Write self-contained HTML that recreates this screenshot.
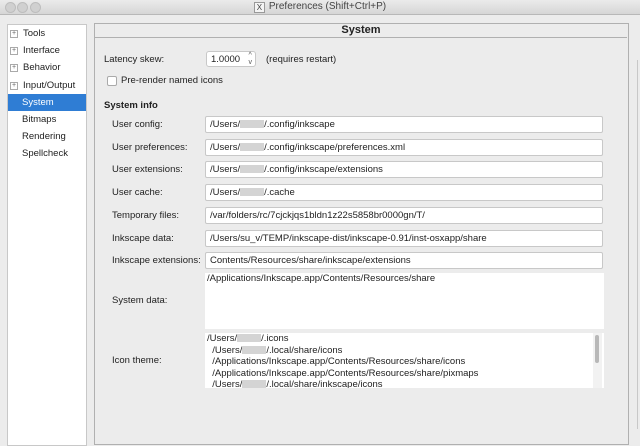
<!DOCTYPE html>
<html><head><style>
body{margin:0;width:640px;height:429px;overflow:hidden;background:#ececec;font-family:"Liberation Sans","DejaVu Sans",sans-serif;font-size:9.5px;color:#222;position:relative}
.a{position:absolute}
.title{left:0;top:0;width:640px;height:14px;background:linear-gradient(#ebebeb,#d6d6d6);border-bottom:1px solid #b8b8b8;text-align:center;font-size:10px;line-height:14px;color:#444}
.title .x{display:inline-block;width:9px;height:9px;border:1px solid #999;font-size:8px;line-height:9px;text-align:center;background:#f4f4f4;margin-right:4px;vertical-align:-1px}
.dot{width:9px;height:9px;border-radius:50%;background:#d0d0d0;border:1px solid #bdbdbd;top:2px}
.side{left:7px;top:24px;width:78px;height:420px;background:#fff;border:1px solid #c8c8c8}
.side div{height:17.2px;line-height:17px;padding-left:14px}
.pl{display:inline-block;width:6px;height:6px;border:1px solid #aaa;font-size:7px;line-height:6px;text-align:center;margin-left:-12px;margin-right:5px;color:#666;vertical-align:1px}
.sel{background:#2f7dd4;color:#fff}
.panel{left:94px;top:23px;width:533px;height:420px;border:1px solid #b0b0b0}
.hdr{left:95px;top:24px;width:532px;height:13px;border-bottom:1px solid #b0b0b0;text-align:center;font-weight:bold;font-size:11px;line-height:13px}
.lbl{left:112px}
.in{left:205px;height:15px;background:#fff;border:1px solid #c8c8c8;border-radius:2px;line-height:15px;padding-left:4px;box-sizing:content-box;width:392px}
.ta{left:205px;width:397px;background:#fff;line-height:11.5px;padding-left:2px;overflow:hidden}
.blur{display:inline-block;width:24px;height:8px;background:#d4d4d4;vertical-align:-1px}
</style></head><body>
<div class="a title"><span class="x">X</span>Preferences (Shift+Ctrl+P)</div>
<div class="a dot" style="left:5px"></div><div class="a dot" style="left:17px"></div><div class="a dot" style="left:30px"></div>
<div class="a side">
<div><span class="pl">+</span>Tools</div>
<div><span class="pl">+</span>Interface</div>
<div><span class="pl">+</span>Behavior</div>
<div><span class="pl">+</span>Input/Output</div>
<div class="sel">System</div>
<div>Bitmaps</div>
<div>Rendering</div>
<div>Spellcheck</div>
</div>
<div class="a panel"></div>
<div class="a hdr">System</div>
<div class="a" style="left:104px;top:54px">Latency skew:</div>
<div class="a" style="left:206px;top:51px;width:50px;height:16px;background:#fff;border:1px solid #c8c8c8;border-radius:3px;line-height:16px;padding-left:4px;box-sizing:border-box">1.0000<span style="position:absolute;right:3px;top:0;font-size:7px;line-height:7px;color:#555">^<br>v</span></div>
<div class="a" style="left:266px;top:54px">(requires restart)</div>
<div class="a" style="left:107px;top:76px;width:8px;height:8px;border:1px solid #aaa;border-radius:2px;background:#fff"></div>
<div class="a" style="left:121px;top:75px">Pre-render named icons</div>
<div class="a" style="left:104px;top:100px;font-weight:bold">System info</div>
<div class="a lbl" style="top:119px">User config:</div>
<div class="a in" style="top:116px">/Users/<span class="blur"></span>/.config/inkscape</div>
<div class="a lbl" style="top:142px">User preferences:</div>
<div class="a in" style="top:139px">/Users/<span class="blur"></span>/.config/inkscape/preferences.xml</div>
<div class="a lbl" style="top:164px">User extensions:</div>
<div class="a in" style="top:161px">/Users/<span class="blur"></span>/.config/inkscape/extensions</div>
<div class="a lbl" style="top:187px">User cache:</div>
<div class="a in" style="top:184px">/Users/<span class="blur"></span>/.cache</div>
<div class="a lbl" style="top:210px">Temporary files:</div>
<div class="a in" style="top:207px">/var/folders/rc/7cjckjqs1bldn1z22s5858br0000gn/T/</div>
<div class="a lbl" style="top:233px">Inkscape data:</div>
<div class="a in" style="top:230px">/Users/su_v/TEMP/inkscape-dist/inkscape-0.91/inst-osxapp/share</div>
<div class="a lbl" style="top:255px">Inkscape extensions:</div>
<div class="a in" style="top:252px">Contents/Resources/share/inkscape/extensions</div>
<div class="a lbl" style="top:295px">System data:</div>
<div class="a ta" style="top:273px;height:56px">/Applications/Inkscape.app/Contents/Resources/share</div>
<div class="a lbl" style="top:355px">Icon theme:</div>
<div class="a ta" style="top:333px;height:55px">/Users/<span class="blur"></span>/.icons<br>&nbsp; /Users/<span class="blur"></span>/.local/share/icons<br>&nbsp; /Applications/Inkscape.app/Contents/Resources/share/icons<br>&nbsp; /Applications/Inkscape.app/Contents/Resources/share/pixmaps<br>&nbsp; /Users/<span class="blur"></span>/.local/share/inkscape/icons<br>&nbsp; /Applications/Inkscape.app/Contents/Resources/share/pixmaps</div>
<div class="a" style="left:593px;top:333px;width:9px;height:55px;background:#f2f2f2"></div>
<div class="a" style="left:595px;top:335px;width:4px;height:28px;background:#b8b8b8;border-radius:2px"></div>
<div class="a" style="left:637px;top:60px;width:3px;height:369px;border-left:1px solid #c8c8c8"></div>
</body></html>
